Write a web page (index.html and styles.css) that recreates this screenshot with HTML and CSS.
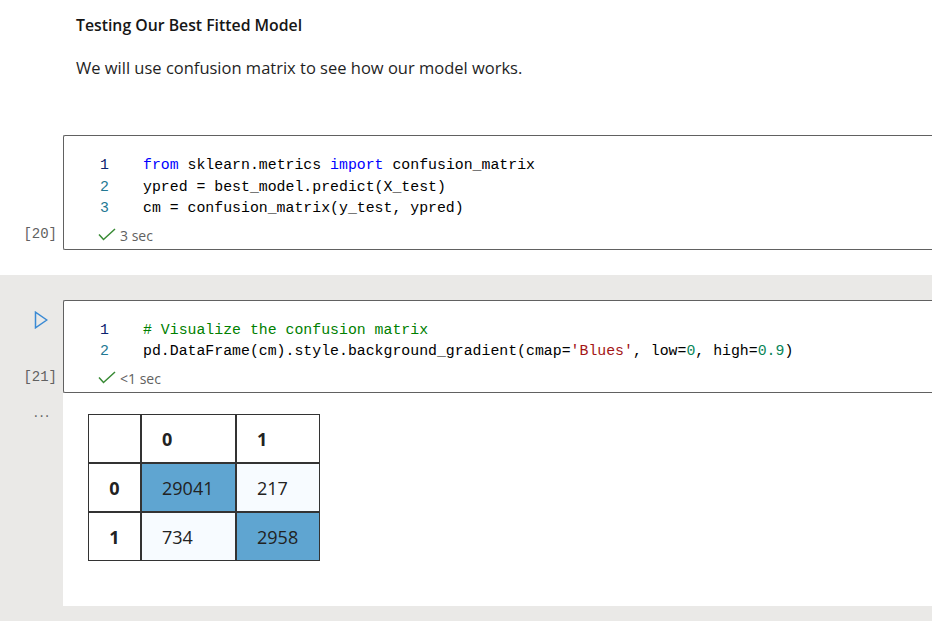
FILE: index.html
```html
<!DOCTYPE html>
<html lang="en">
<head>
<meta charset="utf-8">
<title>Notebook</title>
<link rel="stylesheet" href="styles.css">
</head>
<body>
<main class="notebook">
  <section class="md">
    <h2>Testing Our Best Fitted Model</h2>
    <p>We will use confusion matrix to see how our model works.</p>
  </section>

  <section class="cell">
    <div class="gutter"><span class="count">[20]</span></div>
    <div class="editor">
      <div class="code">
        <div class="line"><span class="ln cur">1</span><span class="src"><span class="kw">from</span> sklearn.metrics <span class="kw">import</span> confusion_matrix</span></div>
        <div class="line"><span class="ln">2</span><span class="src">ypred = best_model.predict(X_test)</span></div>
        <div class="line"><span class="ln">3</span><span class="src">cm = confusion_matrix(y_test, ypred)</span></div>
      </div>
      <div class="status">
        <svg class="check" width="18" height="13" viewBox="0 0 18 13"><path d="M1 6.5 L5.5 11.5 L17 1" fill="none" stroke="#388a34" stroke-width="1.5"/></svg>
        <span>3 sec</span>
      </div>
    </div>
  </section>

  <section class="active">
    <div class="cell">
      <div class="gutter run-gutter">
        <svg class="run" width="14" height="18" viewBox="0 0 14 18"><path d="M1.5 1.2 L1.5 16.8 L12.8 9 Z" fill="none" stroke="#3a8ad4" stroke-width="1.5" stroke-linejoin="miter"/></svg>
        <span class="count">[21]</span>
      </div>
      <div class="editor">
        <div class="code">
          <div class="line"><span class="ln cur">1</span><span class="src"><span class="cm"># Visualize the confusion matrix</span></span></div>
          <div class="line"><span class="ln">2</span><span class="src">pd.DataFrame(cm).style.background_gradient(cmap=<span class="str">'Blues'</span>, low=<span class="num">0</span>, high=<span class="num">0.9</span>)</span></div>
        </div>
        <div class="status">
          <svg class="check" width="18" height="13" viewBox="0 0 18 13"><path d="M1 6.5 L5.5 11.5 L17 1" fill="none" stroke="#388a34" stroke-width="1.5"/></svg>
          <span>&lt;1 sec</span>
        </div>
      </div>
    </div>
    <div class="out-row">
      <div class="out-gutter"><span class="dots">...</span></div>
      <div class="output">
        <table class="df">
          <thead>
            <tr><th class="blank"></th><th>0</th><th>1</th></tr>
          </thead>
          <tbody>
            <tr><th class="idx">0</th><td class="hi">29041</td><td class="lo">217</td></tr>
            <tr><th class="idx">1</th><td class="lo">734</td><td class="hi">2958</td></tr>
          </tbody>
        </table>
      </div>
    </div>
  </section>
</main>
</body>
</html>
```

FILE: styles.css
```css
* { box-sizing: border-box; }

html, body {
  margin: 0;
  padding: 0;
  background: #ffffff;
  width: 932px;
  height: 621px;
  overflow: hidden;
}

body {
  font-family: "Open Sans", "Noto Sans", sans-serif;
  color: #1f1f1f;
}

.notebook {
  display: flex;
  flex-direction: column;
}

.md {
  padding: 13px 0 0 76px;
}

.md h2 {
  margin: 0;
  font-size: 15.8px;
  line-height: 24px;
  font-weight: 600;
  color: #161616;
}

.md p {
  margin: 19px 0 0;
  font-size: 16.5px;
  line-height: 24px;
  color: #1f1f1f;
}

.cell {
  display: flex;
  margin-top: 55px;
}

.gutter {
  width: 63px;
  flex: none;
  display: flex;
  flex-direction: column;
  justify-content: flex-end;
  align-items: flex-end;
  padding: 0 6px 5px 0;
}

.count {
  font-family: "Liberation Mono", "DejaVu Sans Mono", monospace;
  font-size: 14px;
  line-height: 22px;
  color: #616161;
}

.editor {
  flex: 1;
  background: #ffffff;
  border: 1px solid #616161;
  border-right: none;
  border-radius: 2px 0 0 2px;
  padding-top: 19px;
}

.code {
  font-family: "Liberation Mono", "DejaVu Sans Mono", monospace;
  font-size: 14.85px;
  line-height: 21.5px;
  color: #000000;
}

.line {
  display: flex;
  height: 21.5px;
}

.src { white-space: pre; }

.ln {
  width: 45px;
  flex: none;
  text-align: right;
  color: #237893;
  margin-right: 34px;
}

.ln.cur { color: #0b216f; }

.kw { color: #0000ff; }
.cm { color: #008000; }
.str { color: #a31515; }
.num { color: #098658; }

.status {
  display: flex;
  align-items: flex-start;
  gap: 4px;
  padding: 5px 0 0 34px;
  height: 29px;
  font-size: 14px;
  line-height: 21px;
  color: #616161;
}

.check { margin-top: 3px; }

.active {
  margin-top: 25px;
  background: #eae9e7;
  padding: 25px 0 15px;
  display: flex;
  flex-direction: column;
}

.active .cell { margin-top: 0; }

.run-gutter {
  justify-content: space-between;
  align-items: stretch;
  padding: 11px 6px 5px 0;
}

.run {
  align-self: flex-start;
  margin-left: 34px;
}

.run-gutter .count { text-align: right; }

.out-row {
  display: flex;
}

.out-gutter {
  width: 63px;
  flex: none;
  padding: 7px 12px 0 0;
  text-align: right;
}

.dots {
  font-size: 14px;
  letter-spacing: 2px;
  color: #616161;
  line-height: 14px;
}

.output {
  flex: 1;
  background: #ffffff;
  height: 213px;
  padding: 21px 0 0 25px;
}

.df {
  border-collapse: separate;
  border-spacing: 0;
  font-size: 18px;
  color: #222222;
}

.df th, .df td {
  border: 1px solid #333333;
  height: 49px;
  padding: 2px 0 0 20px;
  text-align: left;
  font-weight: 400;
}

.df thead th { font-weight: 700; }

.df th.idx {
  font-weight: 700;
  text-align: center;
  padding: 2px 0 0;
  width: 53px;
}

.df th.blank { width: 53px; padding: 0; }

.df thead th:nth-child(2), .df tbody td:nth-child(2) { width: 95px; }
.df thead th:nth-child(3), .df tbody td:nth-child(3) { width: 84px; }

.df .hi { background: #5fa5d1; }
.df .lo { background: #f7fbff; }
```
